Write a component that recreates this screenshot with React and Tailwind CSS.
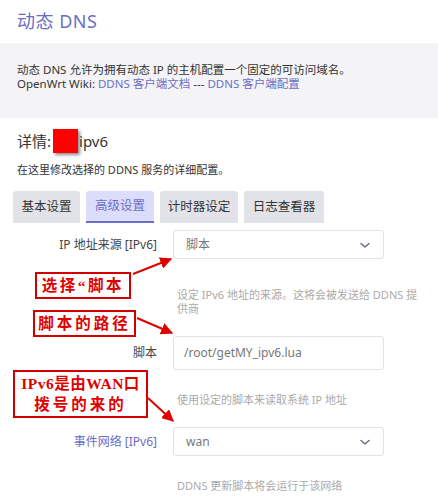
import React from 'react';

const font = { fontFamily: '"Noto Sans", "Noto Sans CJK SC", sans-serif' };

const Chevron = () => (
  <svg width="12" height="12" viewBox="0 0 12 12" className="text-gray-500">
    <path d="M2 4.5 L6 8 L10 4.5" fill="none" stroke="currentColor" strokeWidth="1.6" strokeLinecap="round" strokeLinejoin="round" />
  </svg>
);

const Note = ({ className, children }) => (
  <div
    className={`absolute border-2 border-[#d40000] bg-white text-[#e00000] font-bold text-[15.5px] text-center ${className}`}
    style={{ fontFamily: '"Liberation Serif", "Noto Sans CJK SC", serif' }}
  >
    {children}
  </div>
);

export default function App() {
  return (
    <div className="relative w-[438px] h-[502px] bg-white overflow-hidden text-[#333]" style={font}>
      <div className="h-[43px] flex items-center px-[17px]">
        <h1 className="text-[18px] text-[#6a6fc6] tracking-[0.5px]">动态 DNS</h1>
      </div>
      <div className="bg-[#f4f4f6] h-[75px] px-[17px] pt-[20px] text-[11.5px] leading-[14px]">
        <p>动态 DNS 允许为拥有动态 IP 的主机配置一个固定的可访问域名。</p>
        <p>
          OpenWrt Wiki: <span className="text-[#6a6fc6]">DDNS 客户端文档</span> ---{' '}
          <span className="text-[#6a6fc6]">DDNS 客户端配置</span>
        </p>
      </div>

      <div className="px-[17px] pt-[10px]">
        <h2 className="flex items-center text-[15px] h-[26px]">
          详情:
          <span className="inline-block w-[25px] h-[24px] bg-[#ff0000] shadow-[2px_2px_3px_rgba(0,0,0,0.45)] ml-[2px] mr-[1px]" />
          ipv6
        </h2>
        <p className="text-[11px] mt-[9px] leading-[14px]">在这里修改选择的 DDNS 服务的详细配置。</p>
      </div>

      <div className="flex gap-[6px] px-[13px] mt-[14px] text-[12.5px]">
        <div className="w-[67px] h-[32px] flex items-center justify-center bg-[#e1e3e8] rounded-t-[3px] text-[#333]">基本设置</div>
        <div className="w-[68px] h-[32px] flex items-center justify-center bg-[#dcdcfb] rounded-t-[3px] text-[#6a6fc6] border-b-2 border-[#6a6fc6]">高级设置</div>
        <div className="w-[78px] h-[32px] flex items-center justify-center bg-[#e1e3e8] rounded-t-[3px] text-[#333]">计时器设定</div>
        <div className="w-[80px] h-[32px] flex items-center justify-center bg-[#e1e3e8] rounded-t-[3px] text-[#333]">日志查看器</div>
      </div>

      <div className="mt-[7px] text-[12px]">
        <div className="flex items-center">
          <label className="w-[157px] text-right text-[#444]">IP 地址来源 [IPv6]</label>
          <div className="ml-[16px] w-[211px] h-[29px] border border-[#e2e2e2] rounded-[3px] flex items-center justify-between px-[12px] text-[#777]">
            <span>脚本</span>
            <Chevron />
          </div>
        </div>
        <div className="ml-[177px] mt-[29px] text-[11px] leading-[14px] text-[#aaa] w-[248px] break-all">
          设定 IPv6 地址的来源。这将会被发送给 DDNS 提供商
        </div>

        <div className="flex items-center mt-[20px]">
          <label className="w-[157px] text-right text-[#444]">脚本</label>
          <div className="ml-[16px] w-[211px] h-[34px] border border-[#e2e2e2] rounded-[3px] flex items-center px-[10px] text-[#777]">
            /root/getMY_ipv6.lua
          </div>
        </div>
        <div className="ml-[177px] mt-[23px] text-[11px] leading-[14px] text-[#aaa]">使用设定的脚本来读取系统 IP 地址</div>

        <div className="flex items-center mt-[20px]">
          <label className="w-[157px] text-right text-[#6a6fc6]">事件网络 [IPv6]</label>
          <div className="ml-[16px] w-[211px] h-[29px] border border-[#e2e2e2] rounded-[3px] flex items-center justify-between px-[12px] text-[#777]">
            <span>wan</span>
            <Chevron />
          </div>
        </div>
        <div className="ml-[177px] mt-[23px] text-[11px] leading-[14px] text-[#aaa]">DDNS 更新脚本将会运行于该网络</div>
      </div>

      <Note className="left-[35px] top-[272px] w-[96px] h-[27px] leading-[23px] tracking-[2.5px]">选择“脚本</Note>
      <Note className="left-[33px] top-[310px] w-[103px] h-[27px] leading-[23px] tracking-[3px]">脚本的路径</Note>
      <Note className="left-[13px] top-[370px] w-[135px] h-[48px] pt-[1px] leading-[21px] tracking-[0.5px]">
        IPv6是由WAN口
        <br />
        <span className="tracking-[3px]">拨号的来的</span>
      </Note>

      <svg className="absolute left-0 top-0 pointer-events-none" width="438" height="502">
        <defs>
          <marker id="ah" viewBox="0 0 10 10" refX="9" refY="5" markerWidth="6" markerHeight="6" orient="auto">
            <path d="M0 0 L10 5 L0 10 z" fill="#e00000" />
          </marker>
        </defs>
        <g stroke="#e00000" strokeWidth="2" fill="none" markerEnd="url(#ah)">
          <line x1="133" y1="274" x2="171" y2="259" />
          <line x1="137" y1="318" x2="172" y2="333" />
          <line x1="148" y1="398" x2="173" y2="421" />
        </g>
      </svg>
    </div>
  );
}
